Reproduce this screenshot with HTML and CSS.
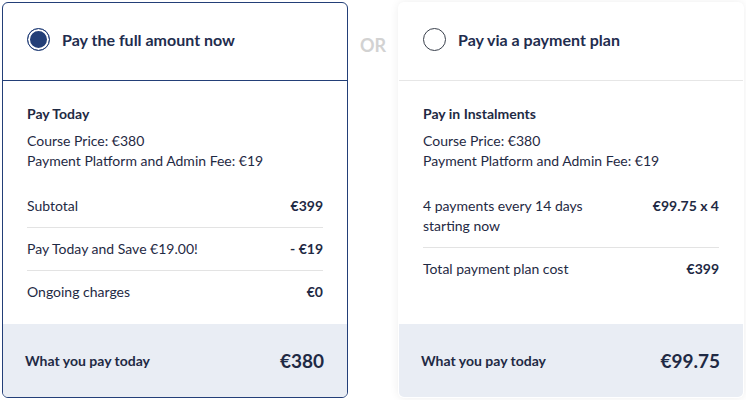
FILE: index.html
```html
<!DOCTYPE html>
<html lang="en">
<head>
  <meta charset="UTF-8">
  <meta name="viewport" content="width=device-width, initial-scale=1.0">
  <title>Payment Options</title>
  <link rel="stylesheet" href="styles.css">
</head>
<body>

  <div class="options">
    <div class="card selected">
      <div class="card-head">
        <span class="radio checked"></span>
        <span class="head-title">Pay the full amount now</span>
      </div>
      <div class="card-body">
        <div class="body-title">Pay Today</div>
        <div class="summary">
          <div>Course Price: €380</div>
          <div>Payment Platform and Admin Fee: €19</div>
        </div>
        <div class="row">
          <span>Subtotal</span>
          <span class="amount">€399</span>
        </div>
        <div class="row">
          <span>Pay Today and Save €19.00!</span>
          <span class="amount">- €19</span>
        </div>
        <div class="row">
          <span>Ongoing charges</span>
          <span class="amount">€0</span>
        </div>
      </div>
      <div class="card-foot">
        <span class="foot-label">What you pay today</span>
        <span class="foot-total">€380</span>
      </div>
    </div>

    <div class="or">OR</div>

    <div class="card">
      <div class="card-head">
        <span class="radio"></span>
        <span class="head-title">Pay via a payment plan</span>
      </div>
      <div class="card-body">
        <div class="body-title">Pay in Instalments</div>
        <div class="summary">
          <div>Course Price: €380</div>
          <div>Payment Platform and Admin Fee: €19</div>
        </div>
        <div class="row">
          <span>4 payments every 14 days<br>starting now</span>
          <span class="amount">€99.75 x 4</span>
        </div>
        <div class="row">
          <span>Total payment plan cost</span>
          <span class="amount">€399</span>
        </div>
      </div>
      <div class="card-foot">
        <span class="foot-label">What you pay today</span>
        <span class="foot-total">€99.75</span>
      </div>
    </div>
  </div>

</body>
</html>
```

FILE: styles.css
```css
body {
  margin: 0;
  font-family: Lato, "Liberation Sans", sans-serif;
  color: #1f2a44;
  background-color: #fff;
}
.options {
  display: flex;
  padding: 2px;
}
.card {
  width: 346px;
  height: 396px;
  box-sizing: border-box;
  display: flex;
  flex-direction: column;
  border: 1px solid transparent;
  border-radius: 6px;
  background-color: #fff;
  box-shadow: 0 0 10px rgba(0, 0, 0, 0.07);
  overflow: hidden;
}
.card.selected {
  border-color: #233f78;
  box-shadow: none;
}
.card-head {
  height: 78px;
  box-sizing: border-box;
  display: flex;
  align-items: center;
  gap: 12px;
  padding: 0 24px 4px 24px;
  border-bottom: 1px solid #e6e6e6;
}
.selected .card-head {
  border-bottom-color: #233f78;
}
.radio {
  width: 23px;
  height: 23px;
  box-sizing: border-box;
  border: 1.5px solid #39404c;
  border-radius: 50%;
}
.radio.checked {
  border-color: #233f78;
  background-color: #233f78;
  box-shadow: inset 0 0 0 2px #fff;
}
.head-title {
  font-size: 16px;
  font-weight: 700;
  color: #1f2d4e;
}
.card-body {
  flex: 1;
  padding: 23px 24px 0 24px;
  font-size: 14px;
  line-height: 20px;
}
.body-title {
  font-weight: 700;
  margin-bottom: 7px;
}
.summary {
  margin-bottom: 14px;
}
.row {
  display: flex;
  justify-content: space-between;
  padding: 11px 0;
  border-bottom: 1px solid #e3e3e3;
}
.row:last-child {
  border-bottom: none;
}
.amount {
  font-weight: 700;
}
.card-foot {
  height: 73px;
  box-sizing: border-box;
  display: flex;
  justify-content: space-between;
  align-items: center;
  padding: 0 23px 0 22px;
  background-color: #e9edf4;
}
.foot-label {
  font-size: 14px;
  font-weight: 700;
}
.foot-total {
  font-size: 19px;
  font-weight: 700;
}
.or {
  width: 50px;
  flex-shrink: 0;
  text-align: center;
  padding-top: 32px;
  font-size: 18px;
  font-weight: 700;
  color: #d2d2d2;
}
```
